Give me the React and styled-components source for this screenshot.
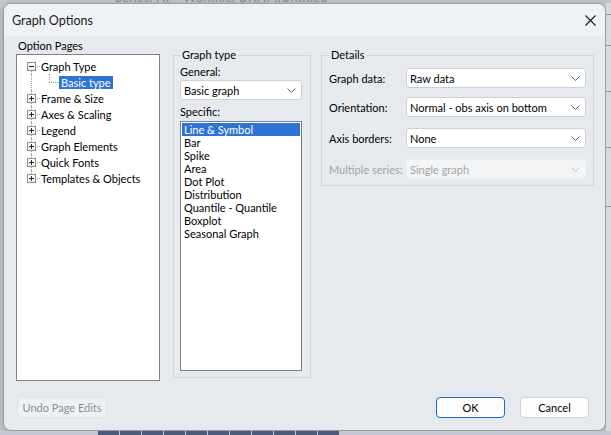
import React from 'react'
import styled, {createGlobalStyle, css} from 'styled-components'

const Global = createGlobalStyle`
	html, body {
		margin: 0;
		padding: 0;
		width: 611px;
		height: 435px;
		overflow: hidden;
		background: #c8ccd2;
	}
	* {
		box-sizing: border-box;
	}
	body {
		font-family: "Segoe UI", Lato, "Noto Sans", sans-serif;
		font-size: 11px;
		color: #000;
	}
`

const Chevron = ({color = '#606060'}) => (
	<svg width="9" height="5" viewBox="0 0 9 5">
		<path d="M0.5 0.5 L4.5 4.5 L8.5 0.5" fill="none" stroke={color} strokeWidth="1" />
	</svg>
)

const CloseIcon = () => (
	<svg width="11" height="11" viewBox="0 0 11 11">
		<path d="M0.5 0.5 L10.5 10.5 M10.5 0.5 L0.5 10.5" stroke="#1b1b1b" strokeWidth="1.1" />
	</svg>
)

const treeItems = [
	{label: 'Graph Type', open: true, line: 'first'},
	{label: 'Basic type', child: true, selected: true},
	{label: 'Frame & Size', line: 'mid'},
	{label: 'Axes & Scaling', line: 'mid'},
	{label: 'Legend', line: 'mid'},
	{label: 'Graph Elements', line: 'mid'},
	{label: 'Quick Fonts', line: 'mid'},
	{label: 'Templates & Objects', line: 'last'},
]

const specific = [
	'Line & Symbol', 'Bar', 'Spike', 'Area', 'Dot Plot', 'Distribution',
	'Quantile - Quantile', 'Boxplot', 'Seasonal Graph',
]

const details = [
	{label: 'Graph data:', value: 'Raw data', top: 4},
	{label: 'Orientation:', value: 'Normal - obs axis on bottom', top: 9},
	{label: 'Axis borders:', value: 'None', top: 11},
	{label: 'Multiple series:', value: 'Single graph', top: 11, disabled: true},
]

const App = () => {
	return (
		<Desktop>
			<Global />
			<TopStrip>
				<ToolText>Series: HP&nbsp;&nbsp;&nbsp;Workfile: UKHP::Untitled</ToolText>
			</TopStrip>
			<Middle>
				<LeftStrip />
				<Dialog>
					<TitleBar>
						<Title>Graph Options</Title>
						<CloseIcon />
					</TitleBar>
					<Content>
						<PagesColumn>
							<Caption>Option Pages</Caption>
							<Tree>
								{treeItems.map((item, i) => (
									<TreeRow key={i}>
										<Gutter $line={item.child ? 'pass' : item.line}>
											{!item.child && <Expander $open={item.open} />}
										</Gutter>
										{item.child && <ChildGutter />}
										<TreeLabel $selected={item.selected}>{item.label}</TreeLabel>
									</TreeRow>
								))}
							</Tree>
						</PagesColumn>

						<TypeGroup>
							<Legend>Graph type</Legend>
							<FieldLabel>General:</FieldLabel>
							<Combo>
								<span>Basic graph</span>
								<Chevron />
							</Combo>
							<FieldLabel $top={4}>Specific:</FieldLabel>
							<ListBox>
								{specific.map((s, i) => (
									<ListItem key={i} $selected={i === 0}>{s}</ListItem>
								))}
							</ListBox>
						</TypeGroup>

						<DetailsGroup>
							<Legend>Details</Legend>
							{details.map((d, i) => (
								<DetailRow key={i} $top={d.top}>
									<DetailLabel $disabled={d.disabled}>{d.label}</DetailLabel>
									<Combo $wide $disabled={d.disabled}>
										<span>{d.value}</span>
										<Chevron color={d.disabled ? '#c4c6c9' : '#606060'} />
									</Combo>
								</DetailRow>
							))}
						</DetailsGroup>
					</Content>
					<Footer>
						<Button $disabled>Undo Page Edits</Button>
						<Spacer />
						<Button $primary>OK</Button>
						<Button>Cancel</Button>
					</Footer>
				</Dialog>
				<RightStrip>
					<RightLine $top={11} />
					<RightLine $top={30} />
					<RightLine $top={45} />
					<RightLine $top={55} />
					<RightLine $top={58} />
				</RightStrip>
			</Middle>
			<BottomStrip>
				{Array.from({length: 11}).map((_, i) => <Cell key={i} />)}
			</BottomStrip>
		</Desktop>
	)
}

export default App

const Desktop = styled.div`
	width: 611px;
	height: 435px;
	display: flex;
	flex-direction: column;
	background: #c9cdd3;
`

const TopStrip = styled.div`
	height: 3px;
	overflow: hidden;
	background: #c3c7cd;
	padding-left: 115px;
`

const ToolText = styled.div`
	margin-top: -9px;
	font-size: 13px;
	line-height: 12px;
	color: #8a8e95;
	white-space: nowrap;
`

const Middle = styled.div`
	display: flex;
	height: 428px;
`

const LeftStrip = styled.div`
	width: 3px;
	background: #c6cad0;
`

const RightStrip = styled.div`
	flex: 1;
	background: #d6d9de;
	display: flex;
	flex-direction: column;
`

const RightLine = styled.div`
	margin-top: ${p => p.$top}px;
	height: 1px;
	background: #8f949b;
`

const BottomStrip = styled.div`
	flex: 1;
	display: flex;
	padding-left: 98px;
	background: #c4c8ce;
`

const Cell = styled.div`
	width: 21px;
	margin-right: 1px;
	background: #4b5a78;
`

const Dialog = styled.div`
	width: 603px;
	height: 428px;
	display: flex;
	flex-direction: column;
	background: #e6eaef;
	border: 1px solid #989ca3;
	border-radius: 8px;
	overflow: hidden;
	box-shadow: 0 2px 8px rgba(0,0,0,0.25);
`

const TitleBar = styled.div`
	height: 32px;
	flex: none;
	display: flex;
	align-items: center;
	justify-content: space-between;
	padding: 0 9px 0 8px;
	background: #eef1f6;
`

const Title = styled.div`
	font-size: 12.5px;
	color: #1a1a1a;
`

const Content = styled.div`
	display: flex;
	align-items: flex-start;
	padding: 2px 0 0 12px;
	height: 345px;
	flex: none;
`

const PagesColumn = styled.div`
	width: 144px;
	display: flex;
	flex-direction: column;
`

const Caption = styled.div`
	height: 16px;
	line-height: 16px;
	padding-left: 2px;
`

const Tree = styled.div`
	height: 327px;
	background: #fff;
	border: 1px solid #7c818a;
	padding-top: 3px;
`

const TreeRow = styled.div`
	height: 16px;
	display: flex;
	align-items: center;
`

const dotted = css`
	content: '';
	position: absolute;
	border-color: #a0a0a0;
	border-style: dotted;
	border-width: 0;
`

const Gutter = styled.div`
	position: relative;
	width: 22px;
	height: 100%;
	display: flex;
	align-items: center;
	padding-left: 10px;

	&::before {
		${dotted};
		left: 14px;
		border-left-width: 1px;
		top: ${p => (p.$line === 'first' ? '8px' : '0')};
		height: ${p => (p.$line === 'first' || p.$line === 'last' ? '8px' : '16px')};
	}

	&::after {
		${dotted};
		display: ${p => (p.$line === 'pass' ? 'none' : 'block')};
		left: 15px;
		top: 8px;
		width: 8px;
		border-top-width: 1px;
	}
`

const ChildGutter = styled.div`
	position: relative;
	width: 20px;
	height: 100%;

	&::before {
		${dotted};
		left: 10px;
		top: 0;
		height: 8px;
		border-left-width: 1px;
	}

	&::after {
		${dotted};
		left: 10px;
		top: 8px;
		width: 9px;
		border-top-width: 1px;
	}
`

const Expander = styled.div`
	position: relative;
	z-index: 1;
	width: 9px;
	height: 9px;
	border: 1px solid #8e8f91;
	background: linear-gradient(#ffffff, #e9e9e9);

	&::before {
		content: '';
		position: absolute;
		left: 1px;
		top: 3px;
		width: 5px;
		height: 1px;
		background: #2a2a2a;
	}

	&::after {
		content: '';
		display: ${p => (p.$open ? 'none' : 'block')};
		position: absolute;
		left: 3px;
		top: 1px;
		width: 1px;
		height: 5px;
		background: #2a2a2a;
	}
`

const TreeLabel = styled.div`
	height: 13px;
	line-height: 13px;
	padding: 0 2px;
	white-space: nowrap;
	background: ${p => (p.$selected ? '#2f74d4' : 'transparent')};
	color: ${p => (p.$selected ? '#fff' : '#000')};
`

const Group = styled.fieldset`
	margin: 9px 0 0;
	border: 1px solid #d2d5d9;
	padding: 1px 7px 6px 6px;
	min-width: 0;
`

const TypeGroup = styled(Group)`
	margin-left: 13px;
	width: 138px;
	height: 331px;
`

const DetailsGroup = styled(Group)`
	margin-left: 10px;
	width: 273px;
	padding-left: 7px;
`

const Legend = styled.legend`
	padding: 0 2px;
	margin-left: 0;
	line-height: 16px;
	height: 16px;
`

const FieldLabel = styled.div`
	height: 16px;
	line-height: 16px;
	margin-top: ${p => p.$top || 0}px;
`

const Combo = styled.div`
	width: ${p => (p.$wide ? '181px' : '122px')};
	height: 20px;
	display: flex;
	align-items: center;
	justify-content: space-between;
	padding: 0 5px 0 3px;
	background: ${p => (p.$disabled ? '#f2f4f6' : '#fff')};
	border: 1px solid ${p => (p.$disabled ? '#eceef1' : '#ccd0d5')};
	border-radius: 3px;
	color: ${p => (p.$disabled ? '#a4a6a9' : '#000')};
	white-space: nowrap;
`

const ListBox = styled.div`
	width: 122px;
	height: 250px;
	margin-top: 1px;
	background: #fff;
	border: 1px solid #7c818a;
	padding: 1px;
`

const ListItem = styled.div`
	height: 13px;
	line-height: 13px;
	padding-left: 2px;
	white-space: nowrap;
	background: ${p => (p.$selected ? '#2f74d4' : 'transparent')};
	color: ${p => (p.$selected ? '#fff' : '#000')};
`

const DetailRow = styled.div`
	display: flex;
	align-items: center;
	margin-top: ${p => p.$top}px;
`

const DetailLabel = styled.div`
	width: 77px;
	flex: none;
	white-space: nowrap;
	color: ${p => (p.$disabled ? '#a2a4a7' : '#000')};
`

const Footer = styled.div`
	display: flex;
	align-items: center;
	gap: 15px;
	padding: 16px 16px 0 13px;
`

const Spacer = styled.div`
	flex: 1;
`

const Button = styled.div`
	width: ${p => (p.$disabled ? '90px' : '69px')};
	height: 21px;
	display: flex;
	align-items: center;
	justify-content: center;
	border-radius: 4px;
	background: ${p => (p.$disabled ? '#eef1f4' : '#fdfdfd')};
	border: 1px solid ${p => (p.$primary ? '#1a6cc4' : p.$disabled ? '#e2e5e9' : '#cfd1d4')};
	color: ${p => (p.$disabled ? '#8c8f93' : '#000')};
`
